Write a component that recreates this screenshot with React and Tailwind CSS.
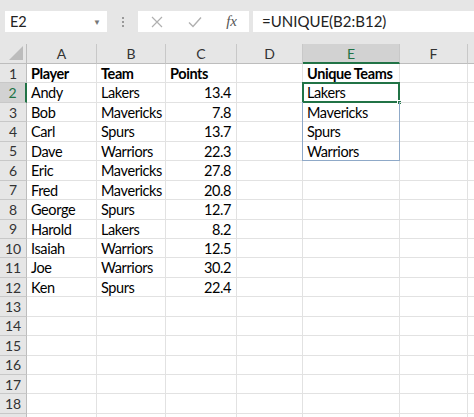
import React from "react";

const cols = [
  { key: "A", w: "w-[70px]" },
  { key: "B", w: "w-[69px]" },
  { key: "C", w: "w-[71px]" },
  { key: "D", w: "w-[66px]" },
  { key: "E", w: "w-[97px]" },
  { key: "F", w: "w-[68px]" },
];

const data = [
  ["Player", "Team", "Points", "", "Unique Teams"],
  ["Andy", "Lakers", "13.4", "", "Lakers"],
  ["Bob", "Mavericks", "7.8", "", "Mavericks"],
  ["Carl", "Spurs", "13.7", "", "Spurs"],
  ["Dave", "Warriors", "22.3", "", "Warriors"],
  ["Eric", "Mavericks", "27.8"],
  ["Fred", "Mavericks", "20.8"],
  ["George", "Spurs", "12.7"],
  ["Harold", "Lakers", "8.2"],
  ["Isaiah", "Warriors", "12.5"],
  ["Joe", "Warriors", "30.2"],
  ["Ken", "Spurs", "22.4"],
];

const font = { fontFamily: "Lato, 'Open Sans', sans-serif" };

const Cell = ({ row, col, value }) => {
  const bold = row === 1;
  const numeric = col === 2 && row > 1;
  const spill = col === 4 && row >= 2 && row <= 5;
  const active = col === 4 && row === 2;
  return (
    <div
      className={`relative shrink-0 h-full border-r border-b border-[#e2e2e2] ${cols[col].w} ${
        numeric ? "text-right pr-[5px]" : "pl-[4px]"
      } ${bold ? "font-bold" : ""} text-[14.5px] tracking-[-0.4px] leading-[19px] text-black whitespace-nowrap`}
    >
      {value}
      {spill && (
        <div
          className={`absolute left-[-1px] right-[-1px] top-[-1px] bottom-[-1px] border-[#8fa9c8] ${
            row === 2 ? "border-t" : ""
          } ${row === 5 ? "border-b" : ""} border-l border-r`}
        />
      )}
      {active && (
        <>
          <div className="absolute left-[-1px] right-[-1px] top-[-1px] bottom-[-1px] border-2 border-[#217346]" />
          <div className="absolute right-[-3px] bottom-[-3px] w-[5px] h-[5px] bg-[#217346] border border-white" />
        </>
      )}
    </div>
  );
};

const App = () => {
  const rows = Array.from({ length: 18 }, (_, i) => i + 1);

  return (
    <div className="w-[474px] h-[417px] overflow-hidden bg-white" style={font}>
      <div className="h-[44px] bg-[#e6e6e6] flex items-center pl-[5px] pb-[1px]">
        <div className="w-[102px] h-[21px] bg-white flex items-center justify-between pl-[5px] pr-[6px]">
          <span className="text-[14.5px] text-[#222]">E2</span>
          <span className="text-[8px] text-[#777]">▼</span>
        </div>
        <div className="w-[31px] flex flex-col items-center gap-[2px]">
          <span className="w-[2px] h-[2px] bg-[#999]" />
          <span className="w-[2px] h-[2px] bg-[#999]" />
          <span className="w-[2px] h-[2px] bg-[#999]" />
        </div>
        <div className="w-[111px] h-[21px] bg-white flex items-center justify-between pl-[13px] pr-[12px]">
          <svg width="12" height="12" viewBox="0 0 12 12" stroke="#b0b0b0" strokeWidth="1.2">
            <path d="M1 1L11 11M11 1L1 11" />
          </svg>
          <svg width="14" height="12" viewBox="0 0 14 12" fill="none" stroke="#b0b0b0" strokeWidth="1.4">
            <path d="M1 6.5L5 10.5L13 1.5" />
          </svg>
          <span className="text-[15px] italic text-[#555]" style={{ fontFamily: "'Liberation Serif', serif" }}>
            fx
          </span>
        </div>
        <div className="ml-[4px] flex-1 h-[21px] bg-white flex items-center pl-[9px]">
          <span className="text-[15px] text-[#222]">=UNIQUE(B2:B12)</span>
        </div>
      </div>

      <div className="flex h-[20px] bg-[#e6e6e6]">
        <div className="relative w-[27px] shrink-0 border-r border-b border-[#bdbdbd]">
          <svg className="absolute right-[3px] bottom-[3px]" width="14" height="14" viewBox="0 0 14 14">
            <path d="M14 0L14 14L0 14Z" fill="#bcbcbc" />
          </svg>
        </div>
        {cols.map((c) => (
          <div
            key={c.key}
            className={`${c.w} shrink-0 flex items-center justify-center text-[14px] text-[#333] border-r border-[#c8c8c8] ${
              c.key === "E" ? "bg-[#d2d2d2] border-b-2 border-b-[#217346] text-[#217346]" : "border-b border-b-[#bdbdbd]"
            }`}
          >
            {c.key}
          </div>
        ))}
        <div className="flex-1 border-b border-[#bdbdbd]" />
      </div>

      {rows.map((r) => (
        <div key={r} className="flex h-[19.45px]">
          <div
            className={`w-[27px] shrink-0 flex items-center justify-center text-[14px] border-b border-[#c8c8c8] ${
              r === 2
                ? "bg-[#d2d2d2] text-[#217346] border-r-2 border-r-[#217346]"
                : "bg-[#e6e6e6] text-[#333] border-r border-r-[#bdbdbd]"
            }`}
          >
            {r}
          </div>
          {cols.map((c, ci) => (
            <Cell key={c.key} row={r} col={ci} value={(data[r - 1] || [])[ci] || ""} />
          ))}
          <div className="flex-1 border-b border-[#e2e2e2]" />
        </div>
      ))}
      <div className="flex h-[19.45px]">
        <div className="w-[27px] shrink-0 bg-[#e6e6e6] border-r border-[#bdbdbd]" />
        {cols.map((c) => (
          <div key={c.key} className={`${c.w} shrink-0 border-r border-[#e2e2e2]`} />
        ))}
      </div>
    </div>
  );
};

export default App;
